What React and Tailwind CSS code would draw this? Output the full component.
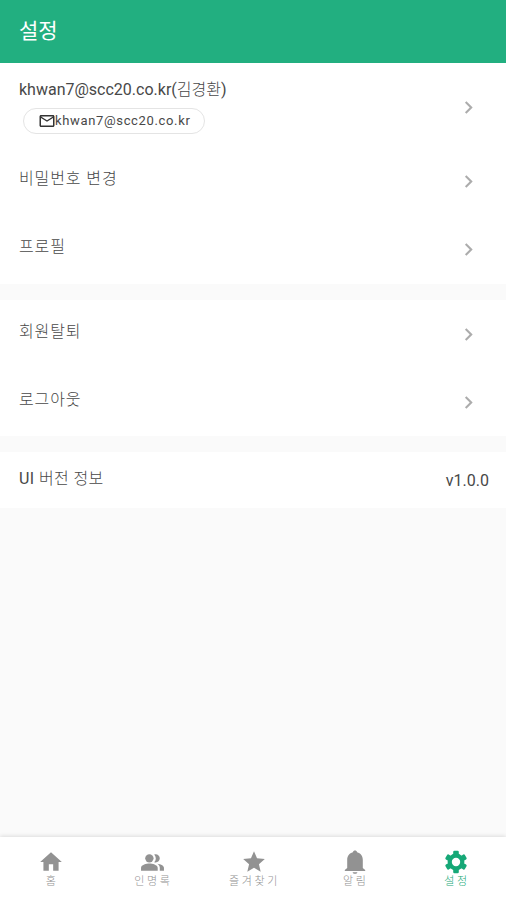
import React, { useState } from "react";
import {
  MdHome,
  MdPeopleAlt,
  MdStar,
  MdMailOutline,
  MdChevronRight,
} from "react-icons/md";

const BellIcon = ({ className }) => (
  <svg viewBox="0 0 24 24" fill="currentColor" className={className}>
    <path d="M12 .6c1.100 0 1.900.7 2.100 1.600 3.600.9 5.700 3.900 5.700 7.600v8.100l2.400 2.100v1H1.800v-1l2.400-2.100V9.800c0-3.700 2.100-6.700 5.700-7.600C10.100 1.300 10.900.6 12 .6z" />
    <path d="M9.600 22.200h4.800c-.3 1-1.200 1.600-2.400 1.600s-2.100-.6-2.400-1.600z" />
  </svg>
);

const GearIcon = ({ className }) => (
  <svg viewBox="0 0 24 24" className={className}>
    <circle
      cx="12"
      cy="12"
      r="6.300"
      fill="none"
      stroke="currentColor"
      strokeWidth="4.200"
    />
    {[0, 60, 120, 180, 240, 300].map((angle) => (
      <rect
        key={angle}
        x="9.200"
        y="0.800"
        width="5.600"
        height="5"
        rx="1.200"
        fill="currentColor"
        transform={`rotate(${angle} 12 12)`}
      />
    ))}
  </svg>
);

const tabs = [
  { label: "홈", icon: <MdHome className="w-[26px] h-[26px]" /> },
  { label: "인명록", icon: <MdPeopleAlt className="w-[25px] h-[25px]" /> },
  { label: "즐겨찾기", icon: <MdStar className="w-[26px] h-[26px]" /> },
  { label: "알림", icon: <BellIcon className="w-6 h-6" /> },
  { label: "설정", icon: <GearIcon className="w-6 h-6" /> },
];

const Chevron = () => (
  <MdChevronRight className="w-[25px] h-[25px] mr-[6px] text-[#acacac]" />
);

const Row = ({ label }) => (
  <button className="w-full h-[68px] pl-[19px] pr-[19px] flex items-center justify-between text-left">
    <span className="pb-1 tracking-[0.9px] font-light">{label}</span>
    <Chevron />
  </button>
);

const App = () => {
  const [active, setActive] = useState("설정");

  return (
    <div className="h-screen flex flex-col bg-[#fafafa] font-[Roboto,'Noto_Sans_CJK_KR',sans-serif] text-[16px] leading-6 text-[#484848]">
      <header className="h-[63px] shrink-0 px-[19px] pb-[2px] flex items-center bg-[#22af80] text-white shadow-[0_1px_1px_rgba(34,175,128,0.5)]">
        <h1 className="text-[21px]">설정</h1>
      </header>

      <main className="flex-1 flex flex-col gap-4">
        <section className="bg-white pb-px">
          <div className="h-[84px] pl-[19px] pr-[19px] pt-[4px] flex items-center justify-between">
            <div className="pb-[3px]">
              <p>
                khwan7@scc20.co.kr(<span className="font-light">김경환</span>)
              </p>
              <div className="mt-[6px] ml-[4px] h-[26px] w-[182px] pl-[14px] flex items-center rounded-full border border-[#e4e4e4] text-[13px] tracking-[0.65px]">
                <MdMailOutline className="w-[18px] h-[18px] shrink-0 text-[#333]" />
                <span className="-ml-px">khwan7@scc20.co.kr</span>
              </div>
            </div>
            <Chevron />
          </div>
          <Row label="비밀번호 변경" />
          <Row label="프로필" />
        </section>

        <section className="bg-white">
          <Row label="회원탈퇴" />
          <Row label="로그아웃" />
        </section>

        <section className="h-14 bg-white pl-[19px] pr-[17px] flex items-center justify-between">
          <span className="pb-[3px] tracking-[0.4px]">
            UI <span className="font-light">버전 정보</span>
          </span>
          <span className="pt-px">v1.0.0</span>
        </section>
      </main>

      <nav className="h-[63px] shrink-0 flex bg-white shadow-[0_-1px_4px_rgba(0,0,0,0.12)]">
        {tabs.map((tab) => (
          <button
            key={tab.label}
            onClick={() => setActive(tab.label)}
            className={`flex-1 pt-3 flex flex-col items-center ${
              active === tab.label ? "text-[#16a877]" : "text-[#929292]"
            }`}
          >
            <span className="h-[26px] pl-px flex items-center">{tab.icon}</span>
            <span className="mt-px pl-[3px] text-[11px] leading-3 tracking-[2.6px] font-light">
              {tab.label}
            </span>
          </button>
        ))}
      </nav>
    </div>
  );
};

export default App;
